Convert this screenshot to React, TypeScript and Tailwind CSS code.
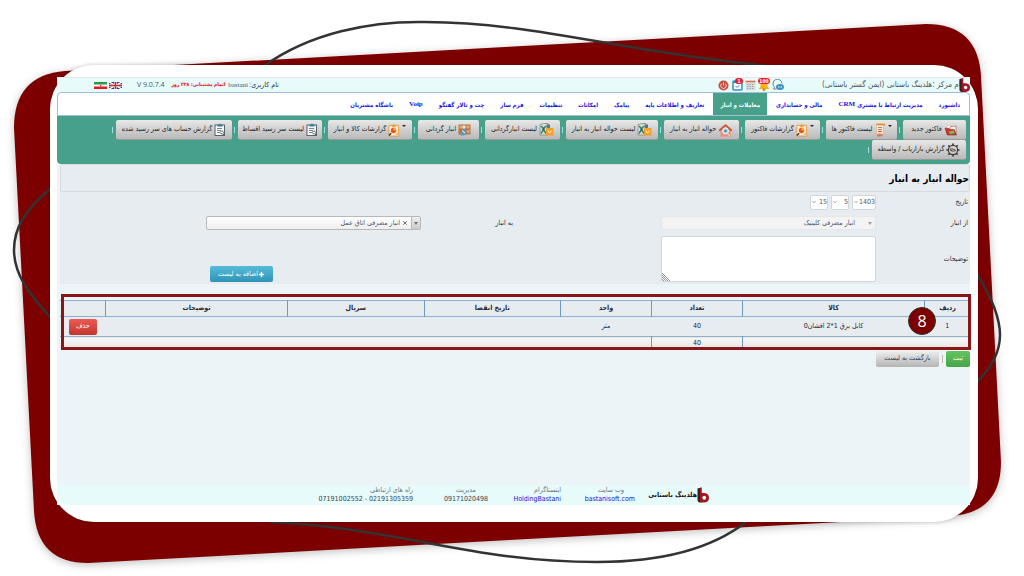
import { useState } from 'react'
import type { ReactNode } from 'react'
import { ChevronDown, Plus, X } from 'lucide-react'

const menuItems: { label: string; latin?: string; active?: boolean }[] = [
  { label: 'داشبورد' },
  { label: 'مدیریت ارتباط با مشتری', latin: 'CRM' },
  { label: 'مالی و حسابداری' },
  { label: 'معاملات و انبار', active: true },
  { label: 'تعاریف و اطلاعات پایه' },
  { label: 'پیامک' },
  { label: 'امکانات' },
  { label: 'تنظیمات' },
  { label: 'فرم ساز' },
  { label: 'چت و تالار گفتگو' },
  { label: '', latin: 'Voip' },
  { label: 'باشگاه مشتریان' },
]

function Logo({ className }: { className?: string }) {
  return (
    <svg viewBox="0 0 24 30" className={className} aria-hidden="true">
      <path d="M1 2 L9 0 V30 H6 Q1 30 1 24 Z" fill="#3a2020" />
      <path d="M6 1 L9 0 V11 H15 Q24 12 24 20.500 Q24 30 14 30 H9 Q5 29 6 24 Z" fill="#a31621" />
      <circle cx="14.500" cy="20.500" r="3.800" fill="#e7fbfb" />
    </svg>
  )
}

function FolderIcon() {
  return (
    <svg viewBox="0 0 28 26" className="h-3 w-[14px]" aria-hidden="true">
      <path d="M4 5 L14 2 L17 9 L6 12 Z" fill="#fff" stroke="#b9a08c" />
      <path d="M12 6 L25 4 V20 H12 Z" fill="#f4efe4" stroke="#8d2b24" />
      <path d="M1 9 H9 L12 12 H21 L26 24 H6 Z" fill="#c9362c" stroke="#7d1d17" />
      <path d="M9 16 L20 14 L22 20 L12 22 Z" fill="#7fb560" />
    </svg>
  )
}

function InvoiceIcon() {
  return (
    <svg viewBox="0 0 22 28" className="h-[14px] w-[11px]" aria-hidden="true">
      <path d="M3 2 H20 V5 H17 V22 H3 Z" fill="#fbe9d2" stroke="#e2a15b" />
      <path d="M3 3 H20" stroke="#e8862e" strokeWidth="3" />
      <path d="M6 9 H14 M6 13 H14" stroke="#9a8c80" strokeWidth="2" />
      <path d="M6 17 H14" stroke="#d24f3e" strokeWidth="2" />
      <path d="M3 24 Q9 19 17 24 L12 27 H5 Z" fill="#d77a5e" />
    </svg>
  )
}

function ReportIcon() {
  return (
    <svg viewBox="0 0 26 28" className="h-[14px] w-3" aria-hidden="true">
      <rect x="2" y="4" width="21" height="23" rx="1" fill="#fff3df" stroke="#e9922c" strokeWidth="2" />
      <path d="M8 5 L12 1 L17 5 V8 H8 Z" fill="#f0a23c" />
      <circle cx="12" cy="15" r="6" fill="#e8542c" />
      <path d="M12 15 V9 A6 6 0 0 1 18 15 Z" fill="#f7b23b" />
      <path d="M2 26 L7 21" stroke="#333" strokeWidth="3" />
      <path d="M16 22 L23 17 V26 H16 Z" fill="#f0c07a" />
    </svg>
  )
}

function HomeIcon() {
  return (
    <svg viewBox="0 0 30 28" className="h-[14px] w-[15px]" aria-hidden="true">
      <path d="M5 12 H25 V27 H5 Z" fill="#ef8d78" />
      <path d="M1 14 L15 2 L29 14 L26 17 L15 7 L4 17 Z" fill="#c85a45" />
      <circle cx="15" cy="16" r="6" fill="#9fd5e6" stroke="#fff" strokeWidth="1.500" />
      <circle cx="15" cy="16" r="2.500" fill="#4b87a8" />
      <path d="M19 21 L24 26" stroke="#eee" strokeWidth="2" />
    </svg>
  )
}

function BoxListIcon() {
  return (
    <svg viewBox="0 0 30 26" className="h-[13px] w-[15px]" aria-hidden="true">
      <path d="M2 3 L10 1 H18 V24 H2 Z" fill="#d8ddd8" stroke="#56605c" />
      <path d="M4 6 L9 11 L14 6 M4 21 L9 13 L14 21" fill="none" stroke="#2f8a53" strokeWidth="3" />
      <path d="M7 10 H11 V15 H7 Z" fill="#2f5f9a" />
      <path d="M15 3 H22 V12 H15 Z" fill="#61727a" />
      <rect x="14" y="10" width="15" height="15" rx="1" fill="#f5a127" />
      <path d="M18 15 L21 20 L25 15" fill="none" stroke="#fff2ce" strokeWidth="2" />
    </svg>
  )
}

function ShelfIcon() {
  return (
    <svg viewBox="0 0 26 24" className="h-3 w-[13px]" aria-hidden="true">
      <rect x="1" y="1" width="24" height="20" fill="#b4754a" />
      <path d="M3 3 H9 V9 H3 Z M17 3 H23 V9 H17 Z M18 12 H23 V18 H18 Z" fill="#dfa873" />
      <path d="M4 23 L8 14 L14 8 L17 13 L13 23 Z" fill="#6299bd" />
      <circle cx="12" cy="6" r="3.500" fill="#efe2d5" />
      <path d="M8 13 L14 18" stroke="#fff" strokeWidth="2" />
    </svg>
  )
}

function ClipboardIcon() {
  return (
    <svg viewBox="0 0 24 28" className="h-[14px] w-3" aria-hidden="true">
      <rect x="2" y="4" width="19" height="21" fill="#f4f6f7" stroke="#57636b" strokeWidth="2" />
      <path d="M7 5 V3 H10 L12 1 L14 3 H17 V7 H7 Z" fill="#347d9f" />
      <path d="M6 11 H16 M6 15 H14 M6 19 H12" stroke="#79858b" strokeWidth="2" />
      <circle cx="16" cy="19" r="3" fill="#fff" stroke="#505a60" strokeWidth="1.500" />
      <path d="M18 22 L22 26" stroke="#505a60" strokeWidth="2" />
    </svg>
  )
}

function WheelIcon() {
  return (
    <svg viewBox="0 0 30 30" className="h-[14px] w-[14px]" aria-hidden="true">
      <circle cx="15" cy="15" r="10" fill="none" stroke="#3b3b3b" strokeWidth="2.500" />
      <path
        d="M15 1 V5 M15 25 V29 M1 15 H5 M25 15 H29 M5 5 L8 8 M22 22 L25 25 M25 5 L22 8 M8 22 L5 25"
        stroke="#3b3b3b"
        strokeWidth="3.500"
      />
      <path d="M8 12 L13 11 L20 14 L22 17 L16 19 L9 17 Z" fill="#615757" />
      <path d="M11 13 L18 17" stroke="#eee" strokeWidth="1.500" />
    </svg>
  )
}

const toolbarItems: { label: string; icon: ReactNode; width: string; menu?: boolean }[] = [
  { label: 'فاکتور جدید', icon: <FolderIcon />, width: 'w-[63px]' },
  { label: 'لیست فاکتور ها', icon: <InvoiceIcon />, width: 'w-[71px]', menu: true },
  { label: 'گزارشات فاکتور', icon: <ReportIcon />, width: 'w-[75px]', menu: true },
  { label: 'حواله انبار به انبار', icon: <HomeIcon />, width: 'w-[75px]' },
  { label: 'لیست حواله انبار به انبار', icon: <BoxListIcon />, width: 'w-[92px]' },
  { label: 'لیست انبارگردانی', icon: <BoxListIcon />, width: 'w-[75px]' },
  { label: 'انبار گردانی', icon: <ShelfIcon />, width: 'w-[61px]' },
  { label: 'گزارشات کالا و انبار', icon: <ReportIcon />, width: 'w-[84px]', menu: true },
  { label: 'لیست سر رسید اقساط', icon: <ClipboardIcon />, width: 'w-[84px]' },
  { label: 'گزارش حساب های سر رسید شده', icon: <ClipboardIcon />, width: 'w-[116px]' },
  { label: 'گزارش بازاریاب / واسطه', icon: <WheelIcon />, width: 'w-[94px]' },
]

function Backdrop() {
  return (
    <svg
      viewBox="0 0 1024 576"
      preserveAspectRatio="none"
      className="absolute inset-0 h-full w-full"
      aria-hidden="true"
    >
      <path
        d="M65 71 L926 24 Q978 24 981 76 L1001 462 Q1001 512 952 516 L88 563 Q37 563 34 511 L14 128 Q14 75 65 71 Z"
        fill="#7d0000"
        className="drop-shadow-[0_2px_4px_rgba(0,0,0,0.25)]"
      />
      <g fill="none" stroke="#333" strokeWidth="2.500">
        <path d="M264 66 C310 33 370 21 425 22 C540 23 610 50 768 66" />
        <path d="M270 522 C400 528 470 562 597 562 C660 562 710 550 746 522" />
        <path d="M51 188 C25 210 14 228 14 250 C14 275 30 295 51 318" />
        <path d="M977 274 C992 298 1000 318 1000 335 C1000 352 991 368 977 382" />
      </g>
    </svg>
  )
}

function Header() {
  return (
    <header className="flex h-[15px] items-center justify-between border-t border-gray-200 bg-[#e7fbfb] pl-[37px] text-[8px] text-gray-600">
      <div className="flex items-center">
        <Logo className="relative -ml-1 h-[14px] w-[11px]" />
        <span>نام مرکز :هلدینگ باستانی (ایمن گستر باستانی)</span>
        <div className="mr-[38px] flex items-center gap-[2px]">
          <button aria-label="پیام ها">
            <svg viewBox="0 0 24 24" className="h-3 w-3">
              <path d="M9 20 H3 L5 16 A9 9 0 1 1 20 9" fill="none" stroke="#6d8591" strokeWidth="2" />
              <ellipse cx="16" cy="16" rx="8" ry="6" fill="#3b93bf" />
              <path d="M12 16 H20" stroke="#fff" strokeWidth="2" strokeDasharray="2 1" />
            </svg>
          </button>
          <button aria-label="اعلان ها" className="relative">
            <svg viewBox="0 0 24 24" className="h-3 w-3">
              <path d="M1 20 L5 15 V8 H19 V15 L23 20 Z" fill="#f8b218" />
              <circle cx="12" cy="21" r="3" fill="#e68a12" />
            </svg>
            <span className="absolute -top-px right-0 h-[6px] w-3 rounded-sm bg-[#e8222d] text-center text-[5px] leading-[6px] font-bold text-white">
              100
            </span>
          </button>
          <button aria-label="تقویم">
            <svg viewBox="0 0 22 24" className="h-3 w-[11px]">
              <rect x="1" y="3" width="20" height="20" fill="#d9dcdc" />
              <path d="M1 5 H21" stroke="#d9704b" strokeWidth="3" />
              <path d="M4 11 H18 M4 15 H18 M4 19 H18" stroke="#9eabae" strokeWidth="2" strokeDasharray="3 2" />
            </svg>
          </button>
          <button aria-label="یادآور" className="relative">
            <svg viewBox="0 0 22 24" className="h-3 w-[11px]">
              <rect x="2" y="4" width="18" height="18" rx="2" fill="#fff" stroke="#2f8fc4" strokeWidth="3" />
              <path d="M2 6 H20" stroke="#2f8fc4" strokeWidth="4" />
              <path d="M7 14 L10 17 L15 12" fill="none" stroke="#2f8fc4" strokeWidth="2" />
            </svg>
            <span className="absolute -top-px right-0 h-[6px] w-2 rounded-full bg-[#e8222d] text-center text-[5px] leading-[6px] font-bold text-white">
              1
            </span>
          </button>
          <button aria-label="خروج" className="mr-px">
            <svg viewBox="0 0 24 24" className="h-[11px] w-[11px]">
              <circle cx="12" cy="12" r="11" fill="#c9503f" />
              <path d="M8 8 A6 6 0 1 0 16 8 M12 5 V12" fill="none" stroke="#f6dfda" strokeWidth="2" />
            </svg>
          </button>
        </div>
      </div>

      <div className="flex items-center text-[7px]">
        <span className="text-gray-800">نام کاربری:</span>
        <span className="mr-px font-['Liberation_Serif',serif]">bastani</span>
        <span className="mr-[3px] text-[5px] font-bold text-red-600">اتمام پشتیبانی: ۲۲۸ روز</span>
        <span dir="ltr" className="mr-[7px] font-['Open_Sans',sans-serif]">
          V 9.0.7.4
        </span>
        <button aria-label="English" className="mr-[15px]">
          <svg viewBox="0 0 26 14" className="h-[7px] w-[13px]">
            <rect width="26" height="14" fill="#27376f" />
            <path d="M0 0 L26 14 M26 0 L0 14" stroke="#fff" strokeWidth="3" />
            <path d="M13 0 V14 M0 7 H26" stroke="#fff" strokeWidth="5" />
            <path d="M13 0 V14 M0 7 H26" stroke="#cf2a3a" strokeWidth="3" />
          </svg>
        </button>
        <button aria-label="فارسی" className="mr-[2px]">
          <svg viewBox="0 0 26 14" className="h-[7px] w-[13px]">
            <rect width="26" height="14" fill="#fff" />
            <rect width="26" height="5" fill="#2c9a45" />
            <rect y="9" width="26" height="5" fill="#dc1c24" />
            <circle cx="13" cy="7" r="1.500" fill="#dc1c24" />
          </svg>
        </button>
      </div>
    </header>
  )
}

function Toolbar() {
  return (
    <div className="flex flex-wrap rounded-b-sm bg-[#47a18a] pt-1 pr-1 pb-1">
      {toolbarItems.map((item) => (
        <div key={item.label} className="flex items-center">
          <button
            className={`${item.width} flex h-5 items-center justify-center gap-[2px] rounded-xs border-b border-[#999] bg-linear-to-b from-[#e8e8e8] to-[#b9b9b9] text-[7px] whitespace-nowrap text-[#222]`}
          >
            {item.menu && <span className="mb-2 h-0 w-0 border-x-2 border-t-2 border-x-transparent border-t-[#222]" />}
            {item.icon}
            {item.label}
          </button>
          <span className="mr-[3px] ml-[2px] h-[6px] w-px bg-[#a8d8e0]" />
        </div>
      ))}
    </div>
  )
}

function DateSelect({ label, value, width }: { label: string; value: string; width: string }) {
  return (
    <div className={`relative ${width}`}>
      <select
        aria-label={label}
        defaultValue={value}
        className="block h-[15px] w-full appearance-none rounded-xs border border-gray-300 bg-white pl-1 text-[7px] text-gray-600"
      >
        <option>{value}</option>
      </select>
      <ChevronDown className="pointer-events-none absolute top-1 left-px text-gray-600" size={6} />
    </div>
  )
}

function TransferForm() {
  const [target, setTarget] = useState('انبار مصرفی اتاق عمل')
  const [notes, setNotes] = useState('')

  return (
    <form onSubmit={(e) => e.preventDefault()} className="ml-[3px] bg-[#e7ecf0] pt-[3px] pb-[2px] text-[7px] text-gray-800">
      <div className="flex items-center">
        <span className="w-[94px] pr-[2px]">تاریخ</span>
        <div className="flex gap-[3px]">
          <DateSelect label="سال" value="1403" width="w-6" />
          <DateSelect label="ماه" value="5" width="w-[18px]" />
          <DateSelect label="روز" value="15" width="w-[18px]" />
        </div>
      </div>

      <div className="mt-[6px] grid grid-cols-2">
        <div className="flex items-center">
          <label htmlFor="from" className="w-[94px] pr-[2px]">
            از انبار
          </label>
          <div className="relative w-[215px]">
            <select
              id="from"
              disabled
              className="block h-[14px] w-full appearance-none rounded-xs border border-gray-200 bg-[#f3f3f3] pr-5 text-[7px] text-gray-600"
            >
              <option>انبار مصرفی کلینیک</option>
            </select>
            <span className="absolute top-[6px] right-1 border-x-2 border-t-[3px] border-x-transparent border-t-gray-400" />
          </div>
        </div>
        <div className="flex items-center">
          <label htmlFor="to" className="w-[94px] pr-[2px]">
            به انبار
          </label>
          <div className="relative w-[215px]">
            <select
              id="to"
              value={target}
              onChange={(e) => setTarget(e.target.value)}
              className="block h-[14px] w-full appearance-none rounded-xs border border-[#b8b8b8] bg-linear-to-b from-white to-[#eee] pr-5 text-[7px] text-gray-600"
            >
              <option value="" />
              <option>انبار مصرفی اتاق عمل</option>
            </select>
            <span className="pointer-events-none absolute top-px right-px flex h-3 w-[9px] items-center justify-center border-l border-[#b8b8b8] bg-linear-to-b from-[#eee] to-[#ccc]">
              <span className="border-x-2 border-t-[3px] border-x-transparent border-t-gray-500" />
            </span>
            <button
              type="button"
              aria-label="پاک کردن"
              onClick={() => setTarget('')}
              className="absolute top-1 right-[13px] text-gray-500"
            >
              <X size={6} strokeWidth={4} />
            </button>
          </div>
        </div>
      </div>

      <div className="mt-[6px] grid grid-cols-2">
        <div className="flex items-center">
          <label htmlFor="notes" className="w-[94px] pr-[2px]">
            توضیحات
          </label>
          <div className="relative w-[215px]">
            <textarea
              id="notes"
              value={notes}
              onChange={(e) => setNotes(e.target.value)}
              className="block h-[46px] w-full resize-none rounded-xs border border-gray-300 bg-white"
            />
            <svg viewBox="0 0 8 8" className="pointer-events-none absolute bottom-px left-px h-2 w-2" aria-hidden="true">
              <path d="M0 0 L8 8 M0 2 L6 8 M0 4 L4 8 M0 6 L2 8" stroke="#777" strokeWidth="0.800" />
            </svg>
          </div>
        </div>
        <div className="flex items-end">
          <div className="mr-[94px] flex w-[215px] justify-end pl-1">
            <button className="flex h-4 w-[63px] items-center justify-center rounded-xs bg-linear-to-b from-[#56bbd9] to-[#2f93b8] text-white">
              <Plus size={7} strokeWidth={5} />
              اضافه به لیست
            </button>
          </div>
        </div>
      </div>
    </form>
  )
}

function ItemsTable() {
  return (
    <div className="relative mt-[10px] ml-[3px] pt-[6px] pb-px">
      <table className="w-full table-fixed border-collapse text-center text-[7px] text-gray-800">
        <thead>
          <tr className="h-4 border-y border-[#8fb2d1] bg-[#e7ecf0]">
            <th className="w-[5%]">ردیف</th>
            <th className="w-[20%] border-r border-[#6d9bc4]">کالا</th>
            <th className="w-[10%] border-r border-[#6d9bc4]">تعداد</th>
            <th className="w-[10%] border-r border-[#6d9bc4]">واحد</th>
            <th className="w-[15%] border-r border-[#6d9bc4]">تاریخ انقضا</th>
            <th className="w-[15%] border-r border-[#6d9bc4]">سریال</th>
            <th className="w-[20%] border-r border-[#6d9bc4]">توضیحات</th>
            <th className="w-[5%] border-r border-[#6d9bc4]" />
          </tr>
        </thead>
        <tbody>
          <tr className="h-5 bg-[#e7ecf0]">
            <td>1</td>
            <td>کابل برق 1*2 افشان0</td>
            <td>40</td>
            <td>متر</td>
            <td />
            <td />
            <td />
            <td>
              <button className="h-4 w-7 rounded-xs bg-linear-to-b from-[#ec5a52] to-[#c23630] text-white">حذف</button>
            </td>
          </tr>
        </tbody>
        <tfoot>
          <tr className="h-3 border-t border-[#8fb2d1] bg-linear-to-b from-[#f7f7f7] to-[#e4e4e2]">
            <td colSpan={2} />
            <td className="border-x border-[#6d9bc4] leading-[10px]">40</td>
            <td colSpan={5} />
          </tr>
        </tfoot>
      </table>
      <div className="pointer-events-none absolute inset-y-0 -right-px left-px border-[3px] border-[#8b1519]" />
      <span className="absolute top-[13px] right-[34px] flex h-7 w-7 items-center justify-center rounded-full border border-[#333] bg-[#7d0000] font-['Open_Sans',sans-serif] text-[16px] font-medium text-white">
        8
      </span>
    </div>
  )
}

function Footer() {
  return (
    <footer className="mt-auto flex h-5 items-center bg-[#e7fbfb] pr-[261px] text-[7px] leading-[9px] text-gray-500">
      <Logo className="h-4 w-3" />
      <strong className="w-[62px] text-gray-900">هلدینگ باستانی</strong>
      <div className="w-[74px] text-center">
        <div className="w-12">
          وب سایت
          <a href="#site" className="block text-[#1414e6]">
            bastanisoft.com
          </a>
        </div>
      </div>
      <div className="w-[73px]">
        اینستاگرام
        <a href="#instagram" className="block text-[#1414e6]">
          HoldingBastani
        </a>
      </div>
      <div className="w-[75px]">
        <div className="w-11 text-center">
          مدیریت
          <div className="text-gray-700">09171020498</div>
        </div>
      </div>
      <div>
        راه های ارتباطی
        <div dir="ltr" className="text-gray-700">
          07191002552 - 02191305359
        </div>
      </div>
    </footer>
  )
}

export default function App() {
  return (
    <div
      dir="rtl"
      className="relative flex min-h-screen flex-col bg-white pt-[65px] pr-[46px] pb-[54px] pl-[50px] font-['DejaVu_Sans_Condensed','DejaVu_Sans',sans-serif]"
    >
      <Backdrop />
      <div className="relative flex flex-1 flex-col rounded-[44px] bg-white pt-3 pr-2 pb-[17px] pl-[7px] shadow-[0_0_4px_rgba(0,0,0,0.2)]">
        <Header />
        <nav className="flex h-6 gap-[2px] rounded-t-sm border border-[#9cc0dc] bg-white pr-[2px] text-[6px] font-bold">
          {menuItems.map((item) => (
            <a
              key={item.label}
              href="#menu"
              className={`flex items-center gap-[2px] px-[7px] whitespace-nowrap ${item.active ? 'bg-[#47a18a] text-white' : 'text-[#1414e6]'}`}
            >
              {item.label}
              {item.latin && <span className="font-['Liberation_Serif',serif] text-[7px]">{item.latin}</span>}
            </a>
          ))}
        </nav>
        <Toolbar />
        <main className="flex flex-1 flex-col bg-[#ecf4f8]">
          <h1 className="ml-[3px] flex h-7 items-center rounded-xs border border-gray-300/70 bg-[#e7ecf0] text-[10px] font-bold text-black">
            حواله انبار به انبار
          </h1>
          <TransferForm />
          <ItemsTable />
          <div className="mt-px flex items-center text-[7px]">
            <button className="h-4 w-6 rounded-xs bg-linear-to-b from-[#62c462] to-[#46a546] text-white">ثبت</button>
            <span className="mx-[3px] h-2 w-px bg-[#c9b8a8]" />
            <button className="h-4 w-[63px] rounded-xs bg-linear-to-b from-[#eee] to-[#b5b5b5] text-gray-700">
              بازگشت به لیست
            </button>
          </div>
          <Footer />
        </main>
      </div>
    </div>
  )
}
